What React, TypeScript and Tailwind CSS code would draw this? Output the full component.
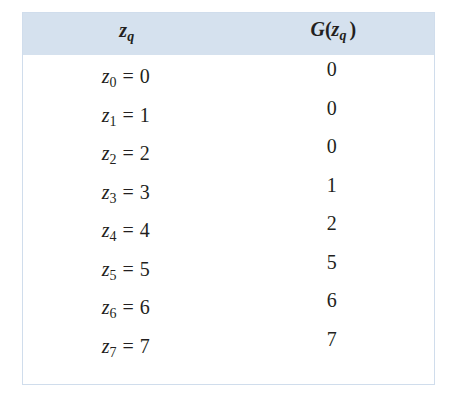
import React from "react";

const rows = [
  [0, 0],
  [1, 0],
  [2, 0],
  [3, 1],
  [4, 2],
  [5, 5],
  [6, 6],
  [7, 7],
];

export default function App() {
  return (
    <div className="w-[456px] h-[404px] bg-white pt-[12px] pl-[22px] font-['Liberation_Serif','Times_New_Roman',serif]">
      <div className="w-[413px] h-[373px] border border-[#d0ddec] text-[#231f20] flex flex-col">
        <div className="h-[42px] bg-[#d5e1ee] grid grid-cols-2 items-center text-[20px] font-bold leading-none">
          <div className="flex justify-center pl-[2px] pb-[4px]">
            <span>
              <i>z</i>
              <span className="text-[14px] align-[-4px] italic">q</span>
            </span>
          </div>
          <div className="flex justify-center pb-[6px] pl-[4px]">
            <span>
              <i>G</i>(<i>z</i>
              <span className="text-[14px] align-[-4px] italic">q</span>
              <span className="ml-[3px]">)</span>
            </span>
          </div>
        </div>
        <div className="pt-[1px] grid grid-cols-2 text-[20px] leading-none">
          {rows.map(([a, b]) => (
            <React.Fragment key={a}>
              <div className="h-[38.5px] flex items-center justify-center">
                <span className="relative top-[1px] flex items-baseline">
                  <i>z</i>
                  <span className="text-[14px] relative top-[4px]">{a}</span>
                  <span className="mx-[6px]">=</span>
                  <span>{a}</span>
                </span>
              </div>
              <div className="h-[38.5px] flex items-center justify-center pb-[12px] pl-[1px]">
                <span>{b}</span>
              </div>
            </React.Fragment>
          ))}
        </div>
      </div>
    </div>
  );
}
